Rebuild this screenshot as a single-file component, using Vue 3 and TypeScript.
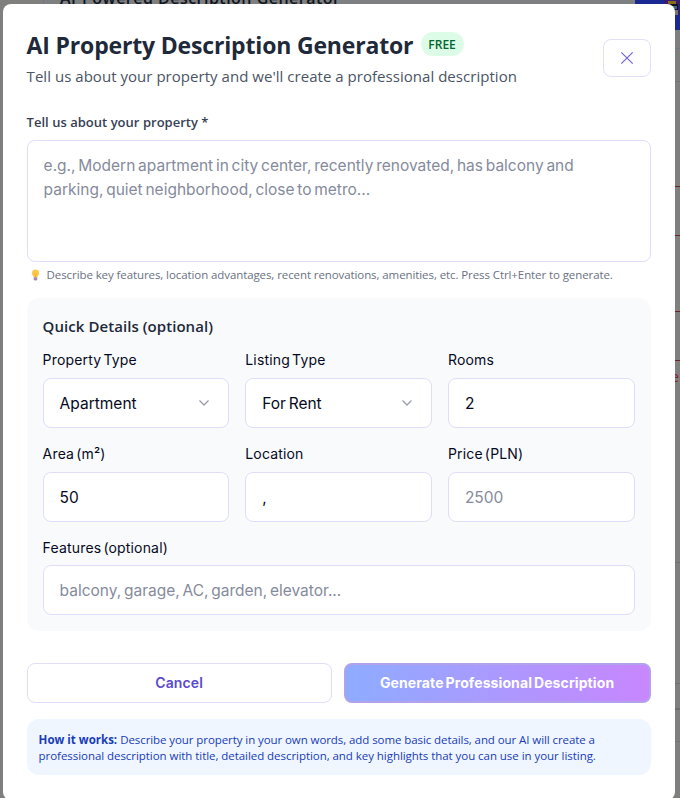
<script setup lang="ts">
import { ref } from 'vue'

interface Field {
  id: string
  label: string
  kind: 'select' | 'input'
  value: string
  placeholder?: string
}

interface Strip {
  height: number
  tone: string
  text?: string
}

const description = ref('')
const features = ref('')
const fields = ref<Field[]>([
  { id: 'type', label: 'Property Type', kind: 'select', value: 'Apartment' },
  { id: 'listing', label: 'Listing Type', kind: 'select', value: 'For Rent' },
  { id: 'rooms', label: 'Rooms', kind: 'input', value: '2' },
  { id: 'area', label: 'Area (m²)', kind: 'input', value: '50' },
  { id: 'location', label: 'Location', kind: 'input', value: ',' },
  { id: 'price', label: 'Price (PLN)', kind: 'input', value: '', placeholder: '2500' },
])

const strips: Strip[] = [
  { height: 19, tone: 'blue' },
  { height: 33, tone: 'grey' },
  { height: 105, tone: 'red' },
  { height: 49, tone: 'red' },
  { height: 76, tone: 'red' },
  { height: 49, tone: 'red' },
  { height: 202, tone: 'violet', text: 'e' },
  { height: 121, tone: 'violet' },
  { height: 26, tone: 'thick' },
  { height: 32, tone: 'grey' },
]
</script>

<template>
  <div class="screen">
    <div class="page" aria-hidden="true">
      <div class="page-card"><span class="page-title">AI-Powered Description Generator</span></div>
      <div class="page-edge">
        <div class="page-banner">
          <svg class="mascot" width="16" height="17" viewBox="0 0 16 17">
            <rect x="0" y="0" width="16" height="15" fill="#3c1c70" />
            <path d="M4 1h8v3H4z" fill="#8a6a1c" />
            <path d="M2 4h12v6H5z" fill="#10131c" />
            <path d="M8 6h5v3H9z" fill="#356a80" />
            <path d="M7 10h7v5h-4z" fill="#777" />
          </svg>
        </div>
        <div v-for="(s, i) in strips" :key="i" class="strip" :class="s.tone" :style="{ height: s.height + 'px' }">{{ s.text }}</div>
      </div>
    </div>

    <section class="modal" role="dialog">
      <header class="head">
        <div>
          <div class="title-row">
            <h2>AI Property Description Generator</h2>
            <span class="badge">FREE</span>
          </div>
          <p class="subtitle">Tell us about your property and we'll create a professional description</p>
        </div>
        <button class="close" type="button" aria-label="Close">
          <svg width="14" height="14" viewBox="0 0 14 14"><path d="M1.3 1.3 12.7 12.7M12.7 1.3 1.3 12.7" fill="none" stroke="#7560d4" stroke-width="1.2" /></svg>
        </button>
      </header>

      <label class="main-label" for="desc">Tell us about your property *</label>
      <textarea id="desc" v-model="description" class="control area" placeholder="e.g., Modern apartment in city center, recently renovated, has balcony and parking, quiet neighborhood, close to metro..."></textarea>
      <p class="hint">
        <svg class="bulb" width="9" height="12" viewBox="0 0 10 13">
          <path d="M5 .3C2.5.3.9 2 .9 4.2c0 2 1.6 2.8 2 4.8h4.2c.4-2 2-2.8 2-4.8C9.100 2 7.500.3 5 .3z" fill="#fcc847" />
          <path d="M3.600 4.600 5 6l1.400-1.400M5 6v3" fill="none" stroke="#f6a62d" stroke-width=".9" />
          <path d="M3 9h4v2.200L6 12.500H4l-1-1.300z" fill="#a18bab" />
        </svg>
        <span>Describe key features, location advantages, recent renovations, amenities, etc. Press Ctrl+Enter to generate.</span>
      </p>

      <div class="details">
        <h3>Quick Details (optional)</h3>
        <div class="grid">
          <div v-for="f in fields" :key="f.id" class="field">
            <label :for="f.id">{{ f.label }}</label>
            <button v-if="f.kind === 'select'" :id="f.id" class="control select" type="button">
              <span>{{ f.value }}</span>
              <svg width="12" height="8" viewBox="0 0 12 8"><path d="M1.500 1.500 6 6l4.500-4.500" fill="none" stroke="#9a9ca8" stroke-width="1.300" /></svg>
            </button>
            <input v-else :id="f.id" v-model="f.value" class="control" type="text" :placeholder="f.placeholder" />
          </div>
          <div class="field wide">
            <label for="features">Features (optional)</label>
            <input id="features" v-model="features" class="control" type="text" placeholder="balcony, garage, AC, garden, elevator..." />
          </div>
        </div>
      </div>

      <div class="actions">
        <button class="btn cancel" type="button">Cancel</button>
        <button class="btn generate" type="button"><span>Generate Professional Description</span></button>
      </div>

      <div class="info">
        <p class="first"><strong>How it works:</strong> <span>Describe your property in your own words, add some basic details, and our AI will create a</span></p>
        <p class="second">professional description with title, detailed description, and key highlights that you can use in your listing.</p>
      </div>
    </section>
  </div>
</template>

<style>
body {
  background: #7f7f7f;
  overflow: hidden;
}
</style>

<style scoped>
* {
  box-sizing: border-box;
}
h2,
h3,
p {
  margin: 0;
}
.screen {
  position: relative;
  width: 680px;
  height: 798px;
  overflow: hidden;
  padding: 4px 5px 0 2.6px;
  background: #7f7f7d;
  font-family: "Open Sans", "Noto Sans", sans-serif;
}
.page {
  position: absolute;
  inset: 0;
}
.page-card {
  position: absolute;
  left: 43px;
  top: 0;
  width: 592px;
  height: 12px;
  border-left: 1px solid #73767c;
  background: #7e7f81;
}
.page-title {
  position: absolute;
  left: 16px;
  top: -13px;
  font-size: 16px;
  line-height: 22px;
  font-weight: 600;
  letter-spacing: 0.48px;
  white-space: nowrap;
  color: #10151d;
}
.page-edge {
  position: absolute;
  right: 0;
  top: 0;
  width: 45px;
}
.page-banner {
  height: 30px;
  padding-left: 29px;
  background: #1b2a93;
}
.mascot {
  display: block;
}
.strip {
  border-bottom: 1px solid #72737a;
  padding: 6px 0 0 36px;
  font-size: 14px;
  line-height: 20px;
  color: #8b1d22;
}
.strip.blue {
  border-color: #687b91;
}
.strip.red {
  border-color: #801d20;
}
.strip.violet {
  border-color: #706f7c;
}
.strip.thick {
  border-bottom: 2px solid #6c6d70;
}
.modal {
  position: relative;
  width: 672px;
  height: 796px;
  padding: 24px;
  border-radius: 8px;
  background: #fff;
}
.head {
  display: flex;
  justify-content: space-between;
  height: 84px;
}
.title-row {
  display: flex;
  align-items: center;
  gap: 8px;
  height: 32px;
  white-space: nowrap;
}
h2 {
  width: 386px;
  padding-top: 2px;
  font-size: 23px;
  line-height: 32px;
  font-weight: 700;
  letter-spacing: -0.17px;
  color: #1e2939;
}
.badge {
  width: 43px;
  height: 24px;
  border-radius: 12px;
  background: #dcfce7;
  color: #016630;
  font-size: 12px;
  line-height: 25px;
  font-weight: 600;
  text-align: center;
}
.subtitle {
  margin-top: 4px;
  font-size: 15px;
  line-height: 24px;
  letter-spacing: 0.035px;
  white-space: nowrap;
  color: #4a5565;
}
.close {
  display: flex;
  align-items: center;
  justify-content: center;
  width: 48px;
  height: 38px;
  margin-top: 11px;
  padding: 0;
  border: 1px solid #e2dff8;
  border-radius: 8px;
  background: #fff;
}
.main-label {
  display: block;
  height: 20px;
  font-size: 13px;
  line-height: 20px;
  font-weight: 600;
  letter-spacing: 0.02px;
  color: #364153;
}
.control {
  display: block;
  width: 100%;
  height: 50px;
  margin: 0;
  padding: 0 16px;
  border: 1px solid #e0ddf8;
  border-radius: 8px;
  background: #fff;
  color: #060a23;
  font-family: Inter, sans-serif;
  font-size: 15.5px;
  font-weight: 400;
  letter-spacing: 0;
  word-spacing: -1.6px;
  outline: none;
}
.control::placeholder {
  color: #858b9c;
  opacity: 1;
}
.area {
  height: 122px;
  margin-top: 8px;
  padding: 13px 16px;
  line-height: 24px;
  resize: none;
  overflow: hidden;
}
.hint {
  display: flex;
  align-items: center;
  gap: 7px;
  height: 16px;
  margin-top: 5px;
  padding-left: 4px;
  font-size: 11.5px;
  line-height: 16px;
  letter-spacing: -0.09px;
  white-space: nowrap;
  color: #6a7282;
}
.details {
  height: 333px;
  margin-top: 15px;
  padding: 16px;
  border-radius: 12px;
  background: #f9fafc;
}
h3 {
  height: 24px;
  font-size: 15px;
  line-height: 24px;
  font-weight: 600;
  letter-spacing: 0.06px;
  color: #1e2939;
}
.grid {
  display: grid;
  grid-template-columns: repeat(3, minmax(0, 1fr));
  gap: 16px;
  margin-top: 12px;
}
.field label {
  display: block;
  height: 20px;
  margin-bottom: 8px;
  font-family: Inter, sans-serif;
  font-size: 14px;
  line-height: 20px;
  letter-spacing: 0.17px;
  word-spacing: -2px;
  color: #060a23;
}
.wide {
  grid-column: 1 / -1;
}
.field.wide label {
  margin-bottom: 7px;
}
.select {
  display: flex;
  align-items: center;
  justify-content: space-between;
  padding-right: 18px;
}
.actions {
  display: grid;
  grid-template-columns: 305px 307px;
  gap: 12px;
  margin-top: 32px;
}
.btn {
  height: 40px;
  padding: 0 0 2px;
  border-radius: 8px;
  font-family: Inter, sans-serif;
  font-size: 14px;
  white-space: nowrap;
}
.cancel {
  border: 1px solid #e0ddf8;
  background: #fff;
  color: #5b4bcb;
  font-weight: 600;
  letter-spacing: 0.1px;
}
.generate {
  border: 2px solid #b2a2ec;
  background: linear-gradient(90deg, #8eacff, #c886ff);
  color: #fff;
  font-weight: 700;
  letter-spacing: 0.1px;
  word-spacing: -1.5px;
}
.info {
  height: 56px;
  margin-top: 16px;
  padding: 13px 12px 11px;
  border-radius: 12px;
  background: #eff6ff;
  color: #193cb8;
  font-size: 11.5px;
  line-height: 16px;
  white-space: nowrap;
}
.first span {
  letter-spacing: -0.08px;
}
.second {
  letter-spacing: -0.05px;
}
</style>
